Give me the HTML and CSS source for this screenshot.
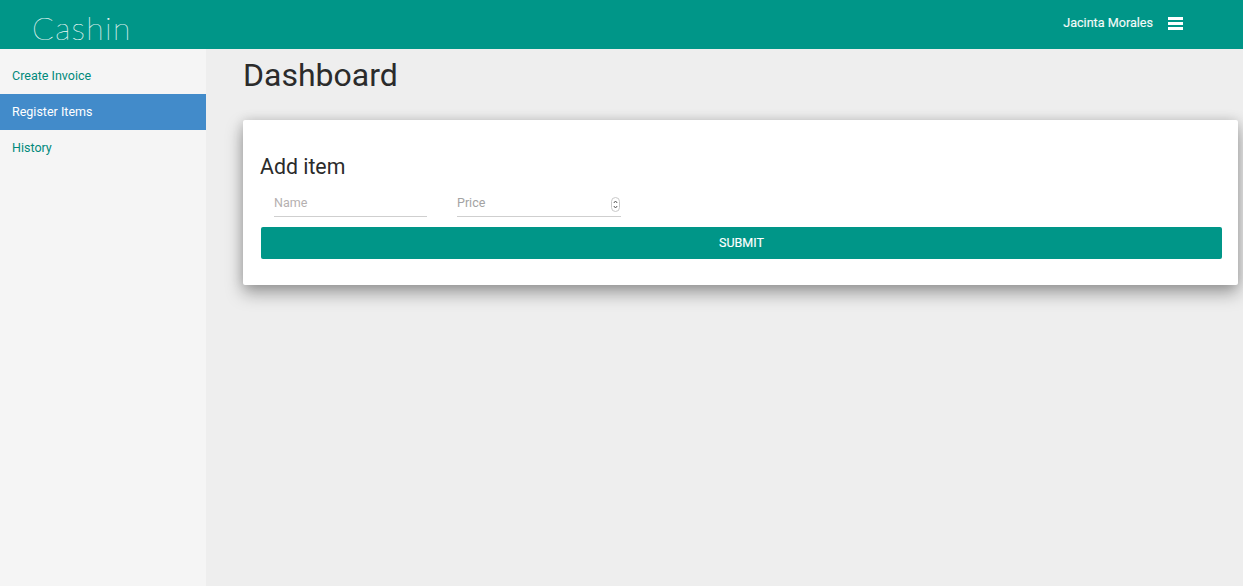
FILE: index.html
```html
<!DOCTYPE html>
<html lang="en">
<head>
    <meta charset="UTF-8">
    <meta name="viewport" content="width=device-width, initial-scale=1.0">
    <title>Cashin - Dashboard</title>
    <link rel="stylesheet" href="styles.css">
</head>
<body>
    <header class="topbar">
        <div class="logo">Cashin</div>
        <div class="user-box">
            <span class="user-name">Jacinta Morales</span>
            <button class="menu-btn" aria-label="Menu">
                <span></span>
                <span></span>
                <span></span>
            </button>
        </div>
    </header>

    <div class="layout">
        <nav class="sidebar">
            <a href="#" class="nav-item">Create Invoice</a>
            <a href="#" class="nav-item active">Register Items</a>
            <a href="#" class="nav-item">History</a>
        </nav>

        <main class="content">
            <h1 class="page-title">Dashboard</h1>

            <section class="card">
                <h2 class="card-title">Add item</h2>
                <form>
                    <div class="form-row">
                        <div class="field field-name">
                            <input type="text" placeholder="Name">
                        </div>
                        <div class="field field-price">
                            <input type="text" placeholder="Price">
                            <svg class="spinner" width="9" height="15" viewBox="0 0 9 15">
                                <rect x="0.5" y="0.5" width="8" height="14" rx="4" fill="#fff" stroke="#c8c8c8"/>
                                <path d="M2.8 6 4.5 4 6.2 6" fill="none" stroke="#555" stroke-width="1"/>
                                <path d="M2.8 9 4.5 11 6.2 9" fill="none" stroke="#555" stroke-width="1"/>
                            </svg>
                        </div>
                    </div>
                    <button type="button" class="submit-btn">SUBMIT</button>
                </form>
            </section>
        </main>
    </div>
</body>
</html>
```

FILE: styles.css
```css
* {
    margin: 0;
    padding: 0;
    box-sizing: border-box;
}

html, body {
    height: 100%;
    overflow: hidden;
}

body {
    display: flex;
    flex-direction: column;
    font-family: Roboto, "Liberation Sans", sans-serif;
    background-color: #eeeeee;
}

.topbar {
    display: flex;
    justify-content: space-between;
    flex-shrink: 0;
    height: 49px;
    background-color: #009688;
    color: #fff;
}

.logo {
    margin-left: 32px;
    padding-top: 7px;
    font-family: Lato, sans-serif;
    font-weight: 100;
    font-size: 32px;
    line-height: 42px;
    letter-spacing: 1.3px;
    color: #fff;
    -webkit-text-stroke: 0.2px #e6f5f3;
}

.user-box {
    display: flex;
    align-items: center;
    height: 45px;
    margin-right: 60px;
}

.user-name {
    font-size: 12.6px;
    color: #f4fbfa;
    -webkit-text-stroke: 0.15px #f4fbfa;
}

.menu-btn {
    display: flex;
    flex-direction: column;
    gap: 2px;
    width: 15px;
    margin: 2px 0 0 15px;
    background: none;
    border: none;
}

.menu-btn span {
    display: block;
    height: 3px;
    background-color: #fff;
}

.layout {
    display: flex;
    flex-grow: 1;
}

.sidebar {
    width: 206px;
    padding-top: 9px;
    background-color: #f5f5f5;
}

.nav-item {
    display: block;
    height: 36px;
    padding-left: 12px;
    font-size: 12.5px;
    line-height: 36px;
    color: #00897b;
    text-decoration: none;
}

.nav-item.active {
    background-color: #428bca;
    color: #fff;
}

.content {
    flex-grow: 1;
    padding: 0 5px 0 37px;
}

.page-title {
    height: 71px;
    font-size: 32px;
    font-weight: 400;
    line-height: 52px;
    color: #2b2b2b;
}

.card {
    height: 165px;
    padding: 33px 16px 0 17px;
    background-color: #fff;
    border-radius: 2px;
    box-shadow: 0 8px 17px rgba(0, 0, 0, 0.35), 0 0 12px rgba(0, 0, 0, 0.12);
}

.card-title {
    height: 37px;
    font-size: 21.3px;
    font-weight: 400;
    line-height: 28px;
    color: #2b2b2b;
}

.form-row {
    display: flex;
    height: 27px;
    margin-left: 14px;
}

.field {
    position: relative;
}

.field-name {
    width: 153px;
    margin-right: 30px;
}

.field-price {
    width: 164px;
}

.field input {
    display: block;
    width: 100%;
    height: 27px;
    padding-bottom: 2px;
    border: none;
    border-bottom: 1px solid #cfcfcf;
    outline: none;
    background: none;
    font-family: inherit;
    font-size: 12.5px;
}

.field-name input::placeholder {
    color: #b5b0b0;
}

.field-price input::placeholder {
    color: #a3a3a3;
}

.spinner {
    position: absolute;
    top: 7px;
    right: 1px;
}

.submit-btn {
    display: block;
    width: 961px;
    height: 32px;
    margin: 10px 0 0 1px;
    padding-bottom: 2px;
    background-color: #009688;
    color: #fff;
    border: none;
    border-radius: 2px;
    font-family: inherit;
    font-size: 12.5px;
    -webkit-text-stroke: 0.15px #fff;
    cursor: pointer;
}
```
